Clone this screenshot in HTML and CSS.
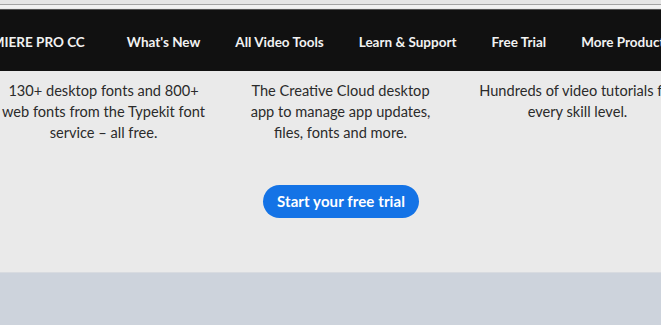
FILE: index.html
```html
<!DOCTYPE html>
<html lang="en">
<head>
    <meta charset="UTF-8">
    <title>Premiere Pro CC</title>
    <link rel="stylesheet" href="styles.css">
</head>
<body>
<!--浏览器顶部-->
<div class="topline"></div>

<!--导航-->
<nav class="nav">
    <ul>
        <li class="brand"><a href="#">PREMIERE PRO CC</a></li>
        <li><a href="#">What's New</a></li>
        <li><a href="#">All Video Tools</a></li>
        <li><a href="#">Learn &amp; Support</a></li>
        <li><a href="#">Free Trial</a></li>
        <li><a href="#">More Products</a></li>
    </ul>
</nav>

<!--介绍-->
<section class="features">
    <p class="feature">130+ desktop fonts and 800+ web fonts from the Typekit font service – all free.</p>
    <p class="feature">The Creative Cloud desktop<br>app to manage app updates,<br>files, fonts and more.</p>
    <p class="feature">Hundreds of video tutorials for every skill level.</p>
</section>

<div class="cta">
    <a class="btn" href="#">Start your free trial</a>
</div>

<!--底部-->
<footer class="band"></footer>
</body>
</html>
```

FILE: styles.css
```css
*{
    margin: 0;
    padding: 0;
}
body{
    background-color: #eaeaea;
    font-family: Lato, "Open Sans", sans-serif;
    overflow: hidden;
}
a{
    text-decoration: none;
    color: #FFFFFF;
}
ul{
    list-style: none;
}
.topline{
    height: 4px;
    border-bottom: 1px solid #a4a4a4;
    background-color: #e6e6e6;
    margin-bottom: 4px;
    box-shadow: 0 3px 0 #f2f2f2;
}
.nav{
    height: 61px;
    background-color: #111111;
    border-top: 1px solid #555555;
}
.nav ul{
    display: flex;
    height: 61px;
    align-items: center;
    gap: 35px;
    margin-left: -33px;
    white-space: nowrap;
}
.nav li a{
    font-size: 13.5px;
    font-weight: 700;
    color: #f2f2f2;
}
.nav .brand{
    margin-right: 7px;
}
.features{
    display: flex;
    margin-left: -15px;
    padding-top: 9px;
}
.feature{
    flex: 0 0 237px;
    padding: 0 11px;
    box-sizing: border-box;
    text-align: center;
    font-size: 14.6px;
    line-height: 21px;
    color: #2b2b2b;
}
.cta{
    display: flex;
    justify-content: center;
    padding: 42px 0 0 21px;
    height: 86px;
    box-sizing: border-box;
}
.btn{
    display: block;
    height: 33px;
    line-height: 33px;
    padding: 0 14px;
    border-radius: 17px;
    background-color: #1473e6;
    font-size: 15px;
    font-weight: 700;
    letter-spacing: 0.1px;
    color: #ffffff;
}
.band{
    margin-top: 43px;
    height: 60px;
    border-top: 1px solid #d8dbe0;
    background-color: #cdd3dc;
}
```
